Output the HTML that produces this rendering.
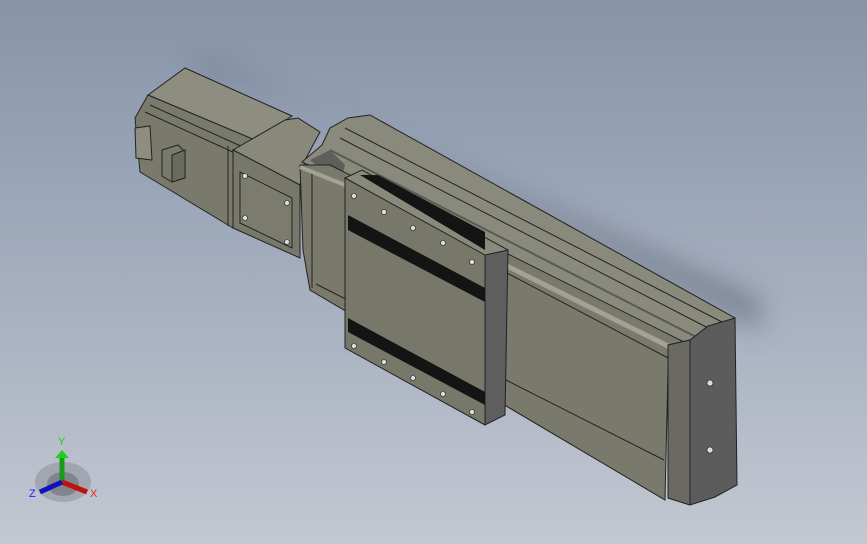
<!DOCTYPE html>
<html><head><meta charset="utf-8"><style>
html,body{margin:0;padding:0;width:867px;height:544px;overflow:hidden}
svg{display:block}
</style></head><body>
<svg width="867" height="544" viewBox="0 0 867 544" xmlns="http://www.w3.org/2000/svg">
<defs>
<linearGradient id="bg" x1="0" y1="0" x2="0" y2="1">
<stop offset="0" stop-color="#8794a8"/><stop offset="0.5" stop-color="#a3adbe"/><stop offset="1" stop-color="#c3c8d1"/>
</linearGradient>
<filter id="blur"><feGaussianBlur stdDeviation="14"/></filter>
</defs>
<rect width="867" height="544" fill="url(#bg)"/>
<polygon points="190,55 300,100 760,300 760,330 340,115 200,70" fill="#4a5264" opacity="0.55" filter="url(#blur)"/>

<!-- motor -->
<polygon points="148,95 185,68 292,116 255,140" fill="#8e8e80" stroke="#222"/>
<polygon points="135,118 148,95 255,140 233,150 233,228 140,172" fill="#7a7a6c" stroke="#222"/>
<line x1="150" y1="105" x2="245" y2="148" stroke="#222"/>
<line x1="145" y1="112" x2="235" y2="153" stroke="#222"/>
<line x1="228" y1="146" x2="228" y2="226" stroke="#222"/>
<polygon points="135,128 150,126 152,160 136,158" fill="#8d8d80" stroke="#222"/>
<polygon points="162,150 178,145 185,152 185,178 172,182 162,176" fill="#7a7a6c" stroke="#222"/>
<polygon points="172,155 185,150 185,178 172,182" fill="#6a6a60" stroke="#222"/>

<!-- coupling -->
<polygon points="233,150 285,120 298,118 320,132 305,160 300,185" fill="#88887b" stroke="#222"/>
<polygon points="233,150 300,185 300,258 233,228" fill="#78786a" stroke="#222"/>
<polygon points="240,172 292,198 292,248 240,223" fill="#7c7c6e" stroke="#222"/>
<g fill="#ddd" stroke="#222" stroke-width=".6">
<circle cx="245" cy="176" r="2.5"/><circle cx="287" cy="203" r="2.5"/><circle cx="245" cy="218" r="2.5"/><circle cx="287" cy="242" r="2.5"/></g>

<!-- rail top -->
<polygon points="302,162 322,145 330,128 348,118 370,115 735,318 710,330 690,345" fill="#8a8a7c" stroke="#222"/>
<line x1="345" y1="128" x2="722" y2="322" stroke="#222"/>
<line x1="340" y1="138" x2="712" y2="330" stroke="#222"/>
<line x1="330" y1="150" x2="698" y2="338" stroke="#5a5a55" stroke-width="2"/>
<polygon points="310,160 330,150 345,165 340,185" fill="#5e5e5a"/>
<!-- rail front face -->
<polygon points="300,165 330,165 690,345 668,370 665,500 310,290 303,250" fill="#7a7a6c" stroke="#222"/>
<line x1="505" y1="265" x2="680" y2="352" stroke="#a3a395" stroke-width="5"/>
<line x1="505" y1="272" x2="672" y2="360" stroke="#222"/>
<line x1="316" y1="284" x2="664" y2="460" stroke="#222"/>
<line x1="312" y1="170" x2="312" y2="288" stroke="#222"/>
<line x1="300" y1="167" x2="345" y2="185" stroke="#a3a395" stroke-width="4"/>
<!-- end cap -->
<polygon points="668,345 690,340 708,326 735,318 737,485 715,497 690,505 668,498" fill="#5c5c5c" stroke="#222"/>
<polygon points="668,345 690,340 690,505 668,498" fill="#6a6a62" stroke="#222"/>
<circle cx="710" cy="383" r="3" fill="#ddd" stroke="#222" stroke-width=".6"/>
<circle cx="710" cy="450" r="3" fill="#ddd" stroke="#222" stroke-width=".6"/>

<!-- carriage -->
<polygon points="345,178 362,170 508,250 485,260" fill="#8a8a7c" stroke="#222"/>
<polygon points="345,178 485,255 485,425 345,348" fill="#78786a" stroke="#222"/>
<polygon points="485,255 508,250 505,415 485,425" fill="#5e5e5e" stroke="#222"/>
<polygon points="360,175 378,175 485,232 485,250" fill="#141414"/>
<polygon points="348,215 485,288 485,302 348,230" fill="#141414"/>
<polygon points="348,318 485,392 485,405 348,332" fill="#141414"/>
<g fill="#ddd" stroke="#222" stroke-width=".6">
<circle cx="354" cy="196" r="2.5"/><circle cx="384" cy="212" r="2.5"/><circle cx="413" cy="228" r="2.5"/><circle cx="443" cy="243" r="2.5"/><circle cx="472" cy="262" r="2.5"/>
<circle cx="354" cy="346" r="2.5"/><circle cx="384" cy="362" r="2.5"/><circle cx="413" cy="378" r="2.5"/><circle cx="443" cy="394" r="2.5"/><circle cx="472" cy="412" r="2.5"/>
</g>

<!-- triad -->
<g>
<ellipse cx="63" cy="482" rx="28" ry="20" fill="#8f949c" opacity=".6"/>
<ellipse cx="63" cy="484" rx="16" ry="12" fill="#6a6e74" opacity=".6"/>
<line x1="62" y1="482" x2="62" y2="455" stroke="#1a9a1a" stroke-width="5"/>
<polygon points="55,458 62,450 69,458" fill="#2c2"/>
<line x1="62" y1="482" x2="87" y2="492" stroke="#c01010" stroke-width="5"/>
<line x1="62" y1="482" x2="40" y2="492" stroke="#1010c0" stroke-width="5"/>
<text x="58" y="445" font-family="Liberation Sans, sans-serif" font-size="11" fill="#2c2">Y</text>
<text x="90" y="497" font-family="Liberation Sans, sans-serif" font-size="11" fill="#e22">X</text>
<text x="29" y="497" font-family="Liberation Sans, sans-serif" font-size="11" fill="#22e">Z</text>
</g>
</svg>
</body></html>
